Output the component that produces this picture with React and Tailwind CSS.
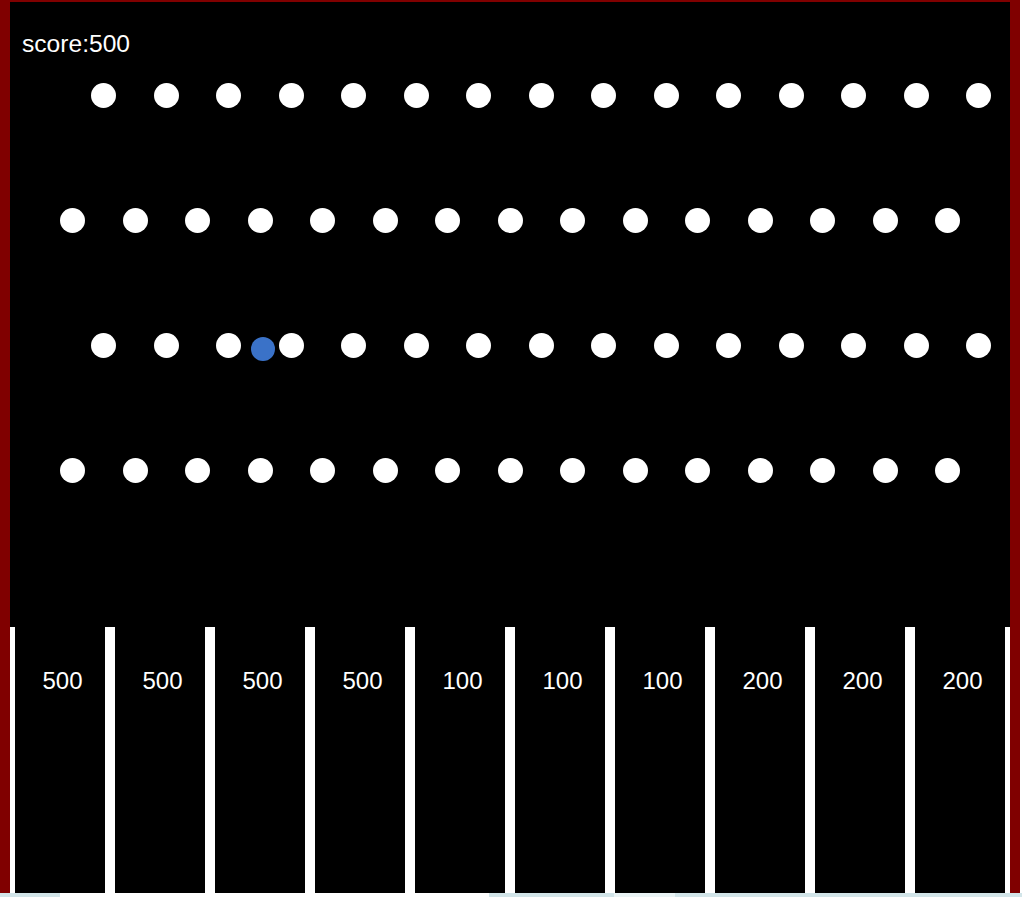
import React from "react";

const row = Array.from({ length: 15 });
const bins = [500, 500, 500, 500, 100, 100, 100, 200, 200, 200];

function Peg() {
  return <div className="w-[25px] h-[25px] rounded-full bg-white shrink-0" />;
}

function PegRow({ offset }) {
  return (
    <div className={`flex h-[25px] gap-[37.5px] ${offset ? "pl-[81.25px]" : "pl-[50px]"}`}>
      {row.map((_, i) => (
        <Peg key={i} />
      ))}
    </div>
  );
}

export default function App() {
  return (
    <div
      className="w-[1022px] h-[897px] bg-white flex flex-col overflow-hidden"
      style={{ fontFamily: '"Liberation Sans", Arial, sans-serif' }}
    >
      <div className="relative w-[1020px] h-[893px] shrink-0 border-t-2 border-x-[10px] border-[#800000] bg-black flex flex-col">
        <div className="pl-[12px] pt-[28px] text-white text-[24.6px] leading-[27px]">score:500</div>
        <div className="mt-[26px] flex flex-col gap-[100px]">
          <PegRow offset />
          <PegRow />
          <PegRow offset />
          <PegRow />
        </div>
        <div className="absolute left-[241px] top-[334.5px] w-[24px] h-[24px] rounded-full bg-[#3a72c8]" />
        <div className="mt-auto h-[266px] flex">
          {bins.map((v, i) => (
            <div
              key={i}
              className="w-[100px] h-full border-x-[5px] border-white pt-[40px] pl-[5px] text-center text-white text-[24px] leading-[27px]"
            >
              {v}
            </div>
          ))}
        </div>
      </div>
      <div className="flex h-[4px] shrink-0">
        <div className="w-[60px] bg-[#d2e5e9]" />
        <div className="w-[429px] bg-white" />
        <div className="w-[125px] bg-[#d2e5e9]" />
        <div className="w-[61px] bg-[#eaf4f5]" />
        <div className="flex-1 bg-[#d2e5e9]" />
      </div>
    </div>
  );
}
